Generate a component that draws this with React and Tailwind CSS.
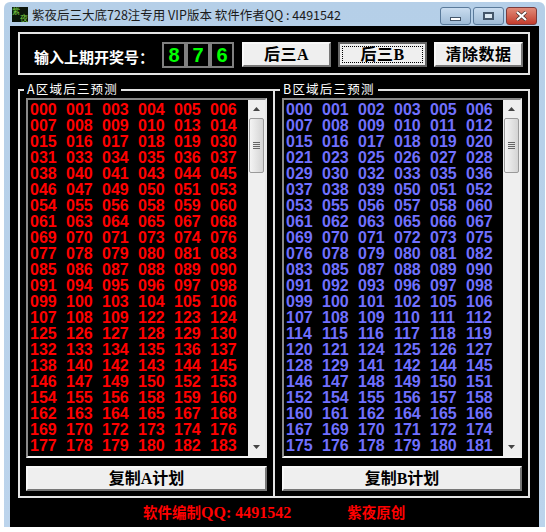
import React from 'react';

const listA = `000 001 003 004 005 006 007 008 009 010 013 014 015 016 017 018 019 030 031 033 034 035 036 037 038 040 041 043 044 045 046 047 049 050 051 053 054 055 056 058 059 060 061 063 064 065 067 068 069 070 071 073 074 076 077 078 079 080 081 083 085 086 087 088 089 090 091 094 095 096 097 098 099 100 103 104 105 106 107 108 109 122 123 124 125 126 127 128 129 130 132 133 134 135 136 137 138 140 142 143 144 145 146 147 149 150 152 153 154 155 156 158 159 160 162 163 164 165 167 168 169 170 172 173 174 176 177 178 179 180 182 183`.split(' ');
const listB = `000 001 002 003 005 006 007 008 009 010 011 012 015 016 017 018 019 020 021 023 025 026 027 028 029 030 032 033 035 036 037 038 039 050 051 052 053 055 056 057 058 060 061 062 063 065 066 067 069 070 071 072 073 075 076 078 079 080 081 082 083 085 087 088 089 090 091 092 093 096 097 098 099 100 101 102 105 106 107 108 109 110 111 112 114 115 116 117 118 119 120 121 124 125 126 127 128 129 141 142 144 145 146 147 148 149 150 151 152 154 155 156 157 158 160 161 162 164 165 166 167 169 170 171 172 174 175 176 178 179 180 181`.split(' ');

const serif = 'font-["Liberation_Serif","Noto_Sans_CJK_SC",serif]';

const Scrollbar = () => (
  <div className="w-[17px] shrink-0 bg-[#efefef] flex flex-col items-center">
    <div className="h-[18px] w-full flex items-center justify-center">
      <svg width="7" height="4" viewBox="0 0 7 4"><path d="M3.5 0L7 4H0z" fill="#444" /></svg>
    </div>
    <div className="h-[55px] w-[15px] rounded-[2px] border border-[#9a9a9a] bg-gradient-to-r from-[#f4f4f4] to-[#d4d4d4] flex flex-col items-center justify-center gap-px">
      <div className="w-[7px] h-px bg-[#666]" />
      <div className="w-[7px] h-px bg-[#666]" />
      <div className="w-[7px] h-px bg-[#666]" />
      <div className="w-[7px] h-px bg-[#666]" />
    </div>
    <div className="flex-1" />
    <div className="h-[18px] w-full flex items-center justify-center">
      <svg width="7" height="4" viewBox="0 0 7 4"><path d="M0 0H7L3.5 4z" fill="#444" /></svg>
    </div>
  </div>
);

const Panel = ({ title, numbers, color, copy, className, titleLeft }) => (
  <div className={`relative border-y-2 border-r-2 border-[#e4e4e4] pt-[7px] pb-[5px] pr-[6px] ${className}`}>
    <span className={`absolute -top-[10px] ${titleLeft} bg-black px-[3px] text-[12.5px] leading-[16px] tracking-[1.2px] text-white font-["Noto_Sans_CJK_SC",sans-serif]`}>{title}</span>
    <div className="h-[360px] flex border-2 border-t-[#8a8a8a] border-l-[#8a8a8a] border-r-[#e8e8e8] border-b-[#f4f4f4]">
      <div className={`flex-1 grid grid-cols-[repeat(6,36px)] auto-rows-[16px] content-start pl-[2px] pt-[2px] bg-black text-[16px] leading-[16px] font-bold font-["Liberation_Sans",sans-serif] ${color}`}>
        {numbers.map((n, i) => <span key={i}>{n}</span>)}
      </div>
      <Scrollbar />
    </div>
    <button className={`mt-[8px] block w-full h-[25px] bg-[#efefef] border-2 border-t-[#f8f8f8] border-l-[#f8f8f8] border-r-[#777] border-b-[#777] text-[16px] leading-[20px] text-black font-bold ${serif}`}>{copy}</button>
  </div>
);

const TopButton = ({ children, focus, className }) => (
  <button className={`${className} w-[89px] h-[25px] flex items-center justify-center border-2 bg-[#efefef] text-[16px] leading-[18px] tracking-[0.5px] font-bold text-black ${serif} ${focus ? 'border-[#666]' : 'border-t-[#f8f8f8] border-l-[#f8f8f8] border-r-[#777] border-b-[#777]'}`}>
    <span className={focus ? 'flex items-center justify-center w-full h-[17px] mx-[2px] border border-dotted border-black' : ''}>{children}</span>
  </button>
);

const Digit = ({ d }) => (
  <div className='w-[24px] h-[26px] border-2 border-[#808080] bg-black text-[#00ff00] text-[20px] leading-[22px] font-bold text-center font-["Liberation_Sans",sans-serif]'>{d}</div>
);

export default function App() {
  return (
    <div className="w-[546px] h-[532px] bg-white overflow-hidden pt-[2px]">
      <div className="ml-[4px] w-[541px] h-[525px] flex flex-col bg-gradient-to-b from-[#b5cfe8] to-[#bcd4ec] rounded-t-[6px]">
        {/* title bar */}
        <div className="h-[24px] shrink-0 flex items-center pl-[8px] pr-[8px]">
          <div className="w-[16px] h-[15px] mt-[1px] bg-[#0a140a] flex text-[8px] leading-[8px] text-[#74c840] font-['Noto_Sans_CJK_SC',sans-serif]">
            <span className="self-start">紫</span>
            <span className="self-end">夜</span>
          </div>
          <span className="ml-[4px] mt-[1px] text-[12.5px] leading-[16px] text-[#1a1a1a] font-['Noto_Sans_CJK_SC',sans-serif]">紫夜后三大底728注专用 VIP版本 软件作者QQ : 4491542</span>
          <div className="ml-auto mt-[3px] flex gap-[2px]">
            <div className="w-[31px] h-[18px] flex items-center justify-center rounded-[3px] border border-[#5a7a9a] bg-gradient-to-b from-[#c9dcef] to-[#9fbbd6]">
              <div className="mt-[6px] w-[11px] h-[4px] border border-[#44566a] bg-white" />
            </div>
            <div className="w-[31px] h-[18px] flex items-center justify-center rounded-[3px] border border-[#5a7a9a] bg-gradient-to-b from-[#c9dcef] to-[#9fbbd6]">
              <div className="w-[11px] h-[8px] border-2 border-[#44566a] bg-[#dce8f2]" />
            </div>
            <div className="w-[31px] h-[18px] flex items-center justify-center rounded-[3px] border border-[#7a3a3a] bg-gradient-to-b from-[#e08a78] to-[#c23a2c]">
              <svg width="13" height="10" viewBox="0 0 13 10"><path d="M2 1l9 8M11 1L2 9" stroke="#44302c" strokeWidth="3.6" /><path d="M2 1l9 8M11 1L2 9" stroke="#fff" strokeWidth="2.2" /></svg>
            </div>
          </div>
        </div>

        {/* client area */}
        <div className="flex-1 flex flex-col mx-[6px] bg-black">
          <div className="mt-[6px] ml-[8px] mr-[9px] h-[43px] flex items-start border-2 border-[#e4e4e4] pl-[14px] pt-[8px]">
            <span className='w-[128px] mt-[5px] whitespace-nowrap text-[15px] leading-[20px] font-bold text-white font-["Noto_Sans_CJK_SC",sans-serif]'>输入上期开奖号：</span>
            <div className="flex"><Digit d="8" /><Digit d="7" /><Digit d="6" /></div>
            <TopButton className="ml-[8px]">后三A</TopButton>
            <TopButton className="ml-[7px]" focus>后三B</TopButton>
            <TopButton className="ml-[7px]">清除数据</TopButton>
          </div>
          <div className="mt-[14px] ml-[8px] mr-[9px] flex">
            <Panel title="A区域后三预测" numbers={listA} color="text-[#ff0000]" copy="复制A计划" className="w-[257px] border-l-2 pl-[6px]" titleLeft="left-[4px]" />
            <Panel title="B区域后三预测" numbers={listB} color="text-[#7070ff]" copy="复制B计划" className="flex-1 pl-[7px]" titleLeft="left-[5px]" />
          </div>
          <div className={`mt-[5px] ml-[133px] flex items-center text-[16px] leading-[20px] font-bold text-[#ff0000] ${serif}`}>
            <span className="text-[14.5px]">软件编制</span>
            <span>QQ: 4491542</span>
            <span className="ml-[56px] text-[14.5px]">紫夜原创</span>
          </div>
        </div>
      </div>
    </div>
  );
}
